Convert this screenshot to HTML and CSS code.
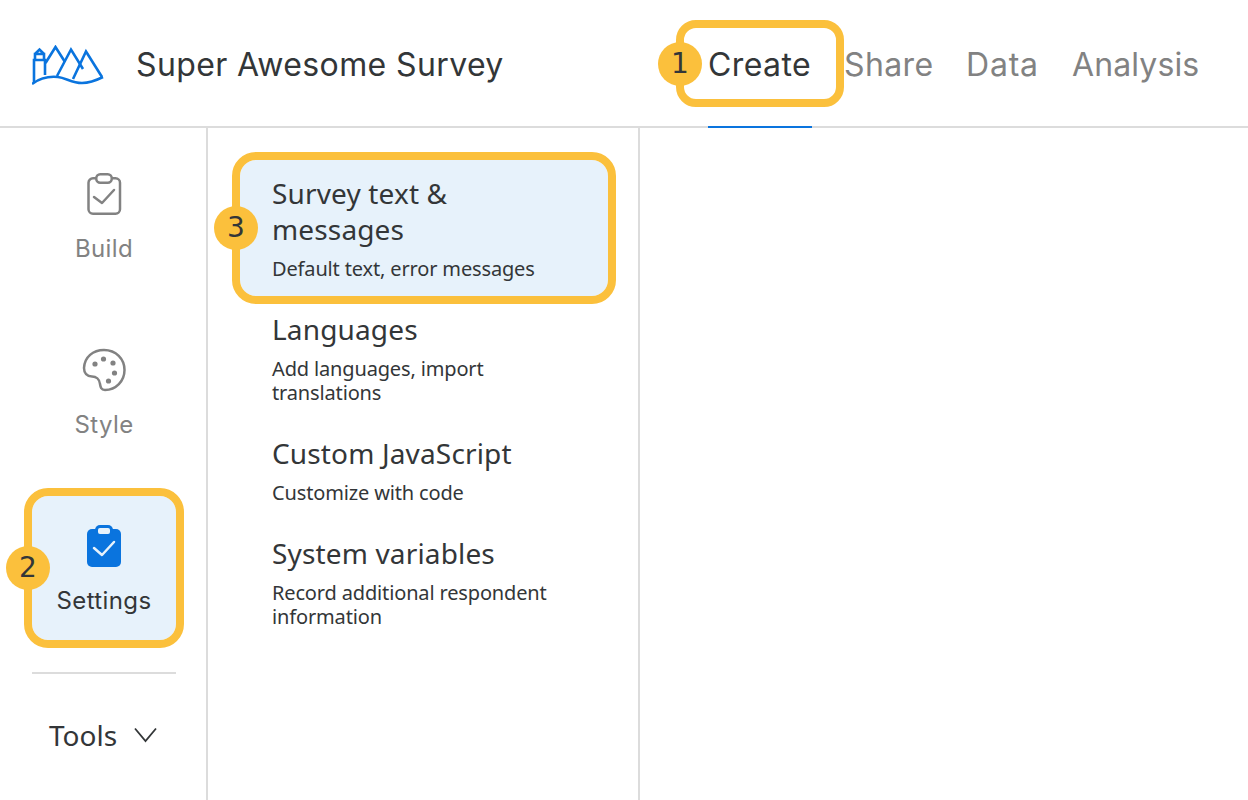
FILE: index.html
```html
<!DOCTYPE html>
<html lang="en">
<head>
<meta charset="utf-8">
<title>Super Awesome Survey</title>
<link rel="stylesheet" href="styles.css">
</head>
<body>
<header class="topbar">
  <svg class="logo" width="72" height="40" viewBox="32 45 72 40" fill="none" stroke="#0a74de" stroke-width="2.600" stroke-linejoin="miter" aria-hidden="true">
    <path d="M34 83V60H45V75"/>
    <path d="M35 59V54H44V59M35 54L39.500 49.500L44 54"/>
    <path d="M45.500 63L55.500 47L65 62"/>
    <path d="M57 76L71 49.500L83 69"/>
    <path d="M73 79L86 51.500L102 77"/>
    <path d="M32 84C40 78 48 76 58 77C66 78 72 83 82 83C90 83 97 80 103 77"/>
  </svg>
  <h1 class="survey-name">Super Awesome Survey</h1>
  <nav class="tabs">
    <a class="tab tab-active">Create<span class="ring ring-tab"></span><span class="badge badge-tab">1</span></a>
    <a class="tab">Share</a>
    <a class="tab tab-short">Data</a>
    <a class="tab tab-long">Analysis</a>
  </nav>
</header>
<main class="workspace">
  <aside class="rail">
    <div class="rail-item">
      <svg width="44" height="44" viewBox="0 0 44 44" fill="none" stroke="#828282" stroke-width="2.500" aria-hidden="true">
        <path d="M14 6.250H11A4.500 4.500 0 0 0 6.500 10.750V37.250A4.500 4.500 0 0 0 11 41.750H33.500A4.500 4.500 0 0 0 38 37.250V10.750A4.500 4.500 0 0 0 33.500 6.250H30"/>
        <rect x="14.250" y="2.250" width="15.500" height="8.500" rx="4"/>
        <path d="M12 25L20 31L32 18" stroke-linecap="round" stroke-linejoin="round"/>
      </svg>
      <span class="rail-label">Build</span>
    </div>
    <div class="rail-item">
      <svg width="44" height="44" viewBox="82 348 44 44" fill="none" stroke="#828282" stroke-width="2.500" aria-hidden="true">
        <path d="M84 368C84.500 357 93 350 104 350C116 350 124.500 359 124.500 370C124.500 381 116 390 105 390C101 390 100.500 387 100 384C99.500 379 96 376.500 92 376.500C87 376.500 84 373 84 368Z"/>
        <g fill="#828282" stroke="none">
          <circle cx="95" cy="364" r="2.600"/>
          <circle cx="103.500" cy="359" r="2.600"/>
          <circle cx="113" cy="363" r="2.600"/>
          <circle cx="114.500" cy="373" r="2.600"/>
          <circle cx="108.500" cy="381" r="2.600"/>
        </g>
      </svg>
      <span class="rail-label">Style</span>
    </div>
    <div class="rail-item rail-item-active">
      <svg width="44" height="44" viewBox="0 0 44 44" aria-hidden="true">
        <path d="M10 5H34A5 5 0 0 1 39 10V38A5 5 0 0 1 34 43H10A5 5 0 0 1 5 38V10A5 5 0 0 1 10 5Z" fill="#0a74de"/>
        <rect x="13" y="1" width="18" height="11" rx="5" fill="#0a74de"/>
        <rect x="16" y="4" width="12" height="6" rx="2" fill="#e7f2fb"/>
        <path d="M12 24L20 31L32 18" fill="none" stroke="#e7f2fb" stroke-width="2.500" stroke-linecap="round" stroke-linejoin="round"/>
      </svg>
      <span class="rail-label">Settings</span>
      <span class="ring ring-fill"></span>
      <span class="badge badge-rail">2</span>
    </div>
    <hr class="rail-divider">
    <div class="tools">
      <span>Tools</span>
      <svg width="23" height="16" viewBox="0 0 23 16" fill="none" stroke="#333638" stroke-width="1.800" aria-hidden="true"><path d="M1 1.500L11.500 14L22 1.500"/></svg>
    </div>
  </aside>
  <section class="menu">
    <div class="menu-item menu-item-active">
      <h2 class="menu-title">Survey text &amp; messages</h2>
      <p class="menu-sub">Default text, error messages</p>
      <span class="ring ring-fill"></span>
      <span class="badge badge-menu">3</span>
    </div>
    <div class="menu-item">
      <h2 class="menu-title">Languages</h2>
      <p class="menu-sub">Add languages, import translations</p>
    </div>
    <div class="menu-item">
      <h2 class="menu-title">Custom JavaScript</h2>
      <p class="menu-sub">Customize with code</p>
    </div>
    <div class="menu-item">
      <h2 class="menu-title">System variables</h2>
      <p class="menu-sub">Record additional respondent information</p>
    </div>
  </section>
  <section class="canvas"></section>
</main>
</body>
</html>
```
FILE: styles.css
```css
* { box-sizing: border-box; }
html, body { margin: 0; height: 100%; overflow: hidden; background: #fff; }
body { width: 1248px; height: 800px; color: #333638; font-family: "Noto Sans", sans-serif; }

.topbar { display: flex; align-items: stretch; height: 128px; padding: 0 48px 0 32px; box-shadow: inset 0 -2px 0 #dcdcdc; }
.logo { align-self: flex-start; margin-top: 45px; }
.survey-name { margin: 2px 0 0 32px; align-self: center; font: 430 32px/40px Inter, sans-serif; letter-spacing: 0.38px; }
.tabs { display: grid; grid-template-columns: 104px 90px 74px 128px; gap: 32px; margin-left: auto; }
.tab { position: relative; display: flex; align-items: center; height: 128px; border-bottom: 2px solid transparent; padding-top: 4px; font: 430 32px/40px Inter, sans-serif; letter-spacing: 0.4px; color: #828282; }
.tab-short { letter-spacing: 0.8px; }
.tab-long { letter-spacing: 0.12px; }
.tab-active { color: #333638; border-bottom-color: #0a74de; }

.ring { position: absolute; border: 8px solid #fbc03c; border-radius: 24px; pointer-events: none; }
.ring-tab { left: -32px; right: -32px; top: 20px; height: 87px; border-radius: 20px; }
.ring-fill { inset: -8px; }
.badge { position: absolute; display: flex; align-items: center; justify-content: center; width: 44px; height: 44px; border-radius: 50%; background: #fbc03c; color: #333638; font: 400 28px/1 "DejaVu Sans", sans-serif; }
.badge-tab { left: -50px; top: 42px; }
.badge-rail { left: -26px; top: 50px; }
.badge-menu { left: -26px; top: 46px; }

.workspace { display: flex; height: 672px; }
.rail { display: flex; flex-direction: column; width: 208px; padding: 16px 32px 0 32px; gap: 32px; border-right: 2px solid #dcdcdc; flex: none; }
.rail-item { position: relative; display: flex; flex-direction: column; align-items: center; width: 144px; height: 144px; padding-top: 28px; border-radius: 16px; flex: none; }
.rail-item-active { background: #e7f2fb; }
.rail-label { margin-top: 17px; font: 440 24px/32px Inter, sans-serif; letter-spacing: 0.4px; color: #828282; }
.rail-item-active .rail-label { color: #333638; }
.rail-divider { width: 144px; height: 2px; margin: 0; border: 0; background: #dcdcdc; flex: none; }
.tools { display: flex; align-items: center; justify-content: center; gap: 17px; margin-top: 11px; font-size: 28px; line-height: 36px; }

.menu { width: 432px; padding: 32px 30px 0 32px; border-right: 2px solid #dcdcdc; flex: none; }
.menu-item { position: relative; padding: 16px 32px; border-radius: 16px; }
.menu-item-active { background: #e7f2fb; }
.menu-title { margin: -1px 0 0; font: 400 28px/36px "Noto Sans", sans-serif; letter-spacing: 0.15px; }
.menu-sub { margin: 10px 0 -1px; font: 400 20px/24px "Noto Sans", sans-serif; letter-spacing: -0.15px; }
.canvas { flex: 1; }
```
